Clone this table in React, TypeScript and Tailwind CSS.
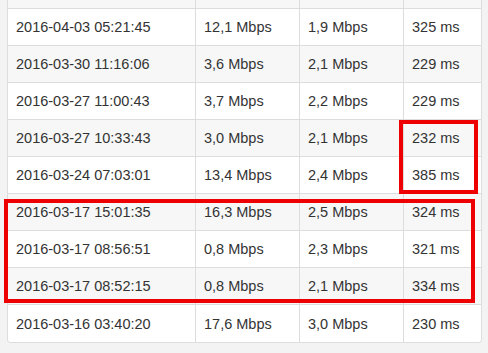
import React from "react";

type Row = { time: string; down: string; up: string; ping: string };

const rows: Row[] = [
  { time: "", down: "", up: "", ping: "" },
  { time: "2016-04-03 05:21:45", down: "12,1 Mbps", up: "1,9 Mbps", ping: "325 ms" },
  { time: "2016-03-30 11:16:06", down: "3,6 Mbps", up: "2,1 Mbps", ping: "229 ms" },
  { time: "2016-03-27 11:00:43", down: "3,7 Mbps", up: "2,2 Mbps", ping: "229 ms" },
  { time: "2016-03-27 10:33:43", down: "3,0 Mbps", up: "2,1 Mbps", ping: "232 ms" },
  { time: "2016-03-24 07:03:01", down: "13,4 Mbps", up: "2,4 Mbps", ping: "385 ms" },
  { time: "2016-03-17 15:01:35", down: "16,3 Mbps", up: "2,5 Mbps", ping: "324 ms" },
  { time: "2016-03-17 08:56:51", down: "0,8 Mbps", up: "2,3 Mbps", ping: "321 ms" },
  { time: "2016-03-17 08:52:15", down: "0,8 Mbps", up: "2,1 Mbps", ping: "334 ms" },
  { time: "2016-03-16 03:40:20", down: "17,6 Mbps", up: "3,0 Mbps", ping: "230 ms" },
];

const cell = "h-full flex items-center pl-[8px] pt-[2px] border-r border-[#dddddd]";

const App = () => {
  return (
    <div
      className="relative w-[488px] h-[353px] overflow-hidden bg-[#f3f3f3] text-[#333333] text-[14.5px]"
      style={{ fontFamily: '"Liberation Sans", Arial, sans-serif' }}
    >
      <div className="ml-[7px] mt-[-28px] w-[475px] border-l border-r border-b border-[#dddddd] rounded-b-[4px] overflow-hidden">
        {rows.map((row, index) => (
          <div
            key={index}
            className={
              "grid grid-cols-[188px_104px_104px_77px] h-[37px] border-b border-[#dddddd] last:border-b-0 " +
              (index % 2 === 0 ? "bg-[#f7f7f7]" : "bg-white")
            }
          >
            <div className={cell}>{row.time}</div>
            <div className={cell}>{row.down}</div>
            <div className={cell}>{row.up}</div>
            <div className={cell + " border-r-0"}>{row.ping}</div>
          </div>
        ))}
      </div>

      {/* annotation boxes */}
      <div className="absolute left-[399px] top-[120px] w-[79px] h-[74px] border-[4px] border-[#ee0000]" />
      <div className="absolute left-[4px] top-[199px] w-[471px] h-[104px] border-[4px] border-[#ee0000]" />
    </div>
  );
};

export default App;
